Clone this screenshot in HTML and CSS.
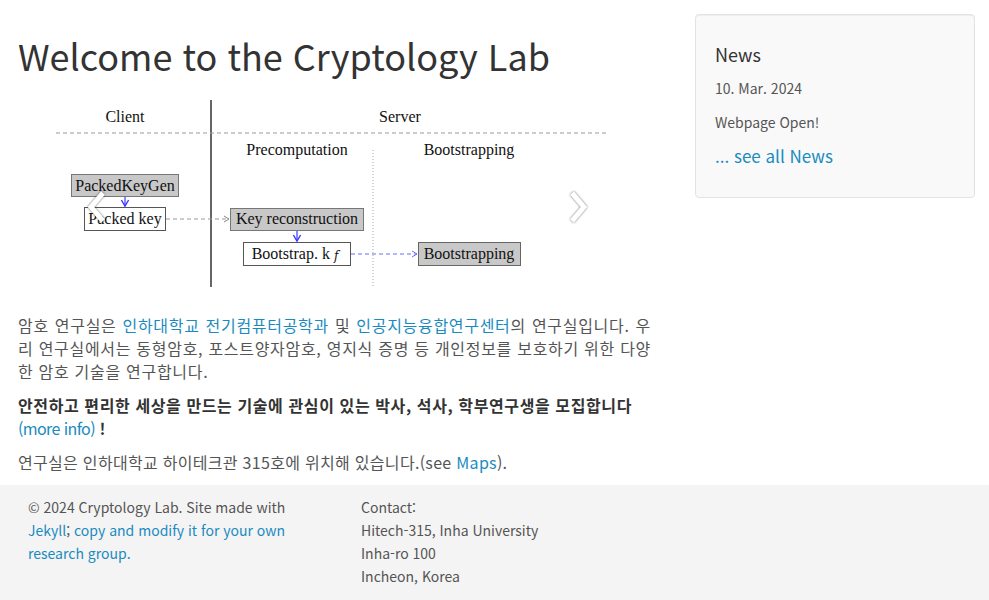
FILE: index.html
```html
<!DOCTYPE html>
<html lang="ko">

<head>
    <meta charset="UTF-8" />
    <meta name="viewport" content="width=device-width, initial-scale=1.0">
    <title>Cryptology Lab</title>
    <link rel="stylesheet" href="styles.css">
</head>

<body>
    <div class="page">
        <div class="main">
            <h1>Welcome to the Cryptology Lab</h1>

            <div class="carousel">
                <svg class="diagram" width="633" height="195" viewBox="0 0 633 195">
                    <defs>
                        <marker id="arrBlue" markerWidth="8" markerHeight="8" refX="6" refY="4" orient="auto">
                            <path d="M1,1 L6,4 L1,7" fill="none" stroke="#3a3aff" stroke-width="1.2" />
                        </marker>
                        <marker id="arrGray" markerWidth="8" markerHeight="8" refX="6" refY="4" orient="auto">
                            <path d="M1,1 L6,4 L1,7" fill="none" stroke="#888" stroke-width="1" />
                        </marker>
                        <marker id="arrLight" markerWidth="8" markerHeight="8" refX="6" refY="4" orient="auto">
                            <path d="M1,1 L6,4 L1,7" fill="none" stroke="#6a6aff" stroke-width="1" />
                        </marker>
                    </defs>

                    <!-- lanes -->
                    <line x1="193" y1="5" x2="193" y2="192" stroke="#666" stroke-width="2" />
                    <line x1="38" y1="38" x2="589" y2="38" stroke="#999" stroke-width="1" stroke-dasharray="4 3" />
                    <line x1="355" y1="55" x2="355" y2="192" stroke="#aaa" stroke-width="1" stroke-dasharray="1 2" />

                    <text class="lbl" x="107" y="27">Client</text>
                    <text class="lbl" x="382" y="27">Server</text>
                    <text class="lbl" x="279" y="60">Precomputation</text>
                    <text class="lbl" x="451" y="60">Bootstrapping</text>

                    <!-- client -->
                    <rect x="53.5" y="79.5" width="107" height="22" fill="#c8c8c8" stroke="#777" />
                    <text class="box" x="107" y="96">PackedKeyGen</text>
                    <line x1="107" y1="102" x2="107" y2="111" stroke="#3a3aff" stroke-width="1.2" marker-end="url(#arrBlue)" />
                    <rect x="66.5" y="112.5" width="81" height="23" fill="#fff" stroke="#555" />
                    <text class="box" x="107" y="129">Packed key</text>
                    <line x1="148" y1="124" x2="211" y2="124" stroke="#999" stroke-dasharray="4 3" marker-end="url(#arrGray)" />

                    <!-- precomputation -->
                    <rect x="212.5" y="113.5" width="133" height="22" fill="#c8c8c8" stroke="#777" />
                    <text class="box" x="279" y="129">Key reconstruction</text>
                    <line x1="279" y1="136" x2="279" y2="146" stroke="#3a3aff" stroke-width="1.2" marker-end="url(#arrBlue)" />
                    <rect x="225.5" y="147.5" width="107" height="23" fill="#fff" stroke="#555" />
                    <text class="box" x="277" y="164">Bootstrap. k <tspan class="sub" dy="1">𝑓</tspan></text>
                    <line x1="333" y1="159" x2="399" y2="159" stroke="#6a6aff" stroke-dasharray="4 3" marker-end="url(#arrLight)" />

                    <!-- bootstrapping -->
                    <rect x="400.5" y="147.5" width="102" height="23" fill="#c8c8c8" stroke="#666" />
                    <text class="box" x="451" y="164">Bootstrapping</text>
                </svg>

                <span class="control left">
                    <svg width="24" height="34" viewBox="0 0 24 34"><polyline points="17,3 5,17 17,31" /></svg>
                </span>
                <span class="control right">
                    <svg width="24" height="34" viewBox="0 0 24 34"><polyline points="7,3 19,17 7,31" /></svg>
                </span>
            </div>

            <p class="intro">암호 연구실은 <a href="#">인하대학교 전기컴퓨터공학과</a> 및 <a href="#">인공지능융합연구센터</a>의 연구실입니다. 우리 연구실에서는 동형암호, 포스트양자암호, 영지식 증명 등 개인정보를 보호하기 위한 다양한 암호 기술을 연구합니다.</p>

            <p class="recruit"><strong>안전하고 편리한 세상을 만드는 기술에 관심이 있는 박사, 석사, 학부연구생을 모집합니다</strong> <a class="info" href="#">(more info)</a> <strong>!</strong></p>

            <p class="location">연구실은 인하대학교 하이테크관 315호에 위치해 있습니다.(see <a href="#">Maps</a>).</p>
        </div>

        <aside class="sidebar">
            <div class="well">
                <h4>News</h4>
                <p class="date">10. Mar. 2024</p>
                <p>Webpage Open!</p>
                <p class="more"><a href="#">... see all News</a></p>
            </div>
        </aside>
    </div>

    <footer class="footer">
        <div class="footer-col">
            © 2024 Cryptology Lab. Site made with <a href="#">Jekyll</a>; <a href="#">copy and modify it for your own research group.</a>
        </div>
        <div class="footer-col">
            Contact:<br>
            Hitech-315, Inha University<br>
            Inha-ro 100<br>
            Incheon, Korea
        </div>
    </footer>
</body>

</html>
```

FILE: styles.css
```css
* {
    box-sizing: border-box;
}

body {
    margin: 0;
    font-family: 'Noto Sans CJK KR', 'Noto Sans', sans-serif;
    font-size: 16px;
    line-height: 23px;
    color: #555;
    background-color: #fff;
}

a {
    color: #1a8bc0;
    text-decoration: none;
}

.page {
    display: flex;
    padding: 14px 14px 0 18px;
}

.main {
    width: 633px;
}

.main h1 {
    font-size: 36px;
    font-weight: 400;
    line-height: 40px;
    color: #333;
    margin: 21px 0 20px;
}

.carousel {
    position: relative;
    height: 195px;
    margin-bottom: 24px;
}

.diagram {
    display: block;
}

.diagram text {
    font-family: 'Liberation Serif', 'DejaVu Serif', serif;
    text-anchor: middle;
    fill: #111;
}

.diagram .lbl {
    font-size: 16px;
}

.diagram .box {
    font-size: 16px;
}

.diagram .sub {
    font-size: 12px;
    font-style: italic;
}

.control {
    position: absolute;
    top: 95px;
}

.control.left {
    left: 68px;
}

.control.right {
    left: 547px;
}

.control svg {
    display: block;
    filter: drop-shadow(0 0 1px rgba(0, 0, 0, 0.6));
}

.control polyline {
    fill: none;
    stroke: #fff;
    stroke-width: 5;
    stroke-linejoin: miter;
}

.main p {
    margin: 0 0 11px;
}

.main p.intro {
    text-align: justify;
    letter-spacing: 0.7px;
}

.main p.recruit strong {
    letter-spacing: 0.6px;
    color: #333;
}

.main p.recruit a.info {
    letter-spacing: -0.6px;
}

.main p.location {
    letter-spacing: 0.3px;
}

.sidebar {
    margin-left: 44px;
    width: 280px;
}

.well {
    background-color: #f9f9f9;
    border: 1px solid #e3e3e3;
    border-radius: 4px;
    padding: 19px 19px 19px;
    box-shadow: inset 0 1px 1px rgba(0, 0, 0, 0.05);
}

.well h4 {
    font-size: 18px;
    font-weight: 400;
    color: #333;
    margin: 10px 0 12px;
    line-height: 20px;
}

.well p {
    font-size: 14px;
    margin: 0 0 10px;
    line-height: 24px;
}

.well p.more {
    font-size: 17px;
    margin: 0 0 10px;
}

.footer {
    display: flex;
    background-color: #f4f4f4;
    padding: 11px 28px 12px;
    font-size: 14px;
    line-height: 23px;
    color: #555;
}

.footer-col:first-child {
    width: 333px;
    padding-right: 43px;
}
```
